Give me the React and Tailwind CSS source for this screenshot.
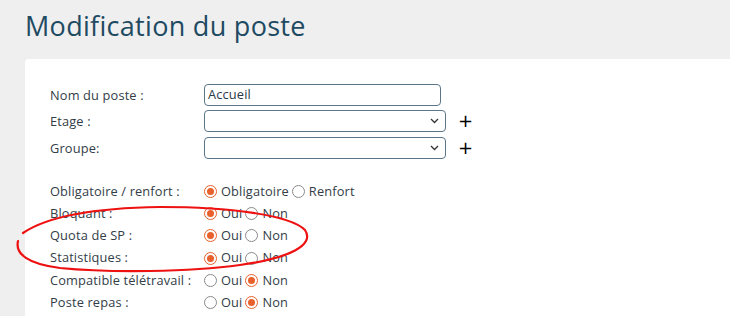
import React from 'react';

function Radio({ checked }) {
  return (
    <span
      className={`inline-flex w-[13px] h-[13px] rounded-full border items-center justify-center shrink-0 ${
        checked ? 'border-[#e8612c]' : 'border-[#8a8a8a]'
      }`}
    >
      {checked && <span className="w-[7px] h-[7px] rounded-full bg-[#e8612c]" />}
    </span>
  );
}

function Chevron() {
  return (
    <svg width="9" height="6" viewBox="0 0 9 6" className="text-[#333]">
      <path d="M1 1l3.5 3.5L8 1" fill="none" stroke="currentColor" strokeWidth="1.3" />
    </svg>
  );
}

const radios = [
  { label: 'Obligatoire / renfort :', a: 'Obligatoire', b: 'Renfort', on: 'a' },
  { label: 'Bloquant :', a: 'Oui', b: 'Non', on: 'a' },
  { label: 'Quota de SP :', a: 'Oui', b: 'Non', on: 'a' },
  { label: 'Statistiques :', a: 'Oui', b: 'Non', on: 'a' },
  { label: 'Compatible télétravail :', a: 'Oui', b: 'Non', on: 'b' },
  { label: 'Poste repas :', a: 'Oui', b: 'Non', on: 'b' },
];

export default function App() {
  return (
    <div className="w-[730px] h-[316px] overflow-hidden bg-[#efefef] relative font-['Open_Sans',sans-serif]">
      <h1 className="pl-[25px] pt-[6px] h-[59px] text-[27px] leading-[40px] text-[#1e4a62] tracking-[0.3px]">
        Modification du poste
      </h1>

      <div className="ml-[25px] bg-white rounded-tl-[4px] h-[300px] pl-[25px] pt-[25px] text-[12.8px] tracking-[0.15px] text-[#333d47]">
        {/* Text fields */}
        <div className="flex items-center h-[22px]">
          <span className="w-[154px] pt-[1px]">Nom du poste :</span>
          <div className="w-[237px] h-[22px] border border-[#5b7687] rounded-[4px] flex items-center px-[3px] text-[#2a3a46]">
            Accueil
          </div>
        </div>
        <div className="flex items-center h-[22px] mt-[4px]">
          <span className="w-[154px] pt-[1px]">Etage :</span>
          <div className="w-[242px] h-[22px] border border-[#5b7687] rounded-[4px] flex items-center justify-end pr-[6px]">
            <Chevron />
          </div>
          <span className="ml-[12px] text-[18px] leading-none text-black font-['DejaVu_Sans',sans-serif]">+</span>
        </div>
        <div className="flex items-center h-[22px] mt-[5px]">
          <span className="w-[154px] pt-[1px]">Groupe:</span>
          <div className="w-[242px] h-[22px] border border-[#5b7687] rounded-[4px] flex items-center justify-end pr-[6px]">
            <Chevron />
          </div>
          <span className="ml-[12px] text-[18px] leading-none text-black font-['DejaVu_Sans',sans-serif]">+</span>
        </div>

        {/* Radios */}
        <div className="mt-[21px] flex flex-col">
          {radios.map((r) => (
            <div key={r.label} className="flex items-center h-[22.3px]">
              <span className="w-[154px] whitespace-nowrap">{r.label}</span>
              <Radio checked={r.on === 'a'} />
              <span className="ml-[4px] mr-[3px]">{r.a}</span>
              <Radio checked={r.on === 'b'} />
              <span className="ml-[4px]">{r.b}</span>
            </div>
          ))}
        </div>
      </div>

      {/* hand-drawn red annotation */}
      <svg className="absolute left-0 top-0 pointer-events-none" width="730" height="316">
        <path
          d="M23 233 C 45 218, 90 208, 160 207 C 230 207, 290 215, 305 230 C 315 245, 290 258, 240 265 C 190 272, 110 273, 60 268 C 28 264, 15 254, 18 241"
          fill="none"
          stroke="#ee1111"
          strokeWidth="2.2"
          strokeLinecap="round"
        />
      </svg>
    </div>
  );
}
